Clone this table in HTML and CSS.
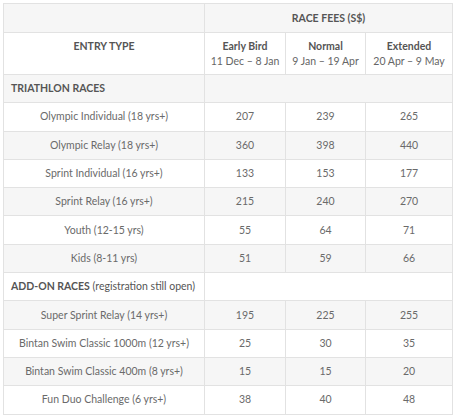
FILE: index.html
```html
<!DOCTYPE html>
<html>
<head>
<meta charset="utf-8">
<link rel="stylesheet" href="styles.css">
</head>
<body>
<div class="wrap">
<table class="fees">
  <colgroup>
    <col class="c-entry">
    <col class="c-early">
    <col class="c-normal">
    <col class="c-ext">
  </colgroup>
  <tr class="h1">
    <th></th>
    <th colspan="3">RACE FEES (S$)</th>
  </tr>
  <tr class="h2">
    <th>ENTRY TYPE</th>
    <th>Early Bird<br><span class="date">11 Dec – 8 Jan</span></th>
    <th>Normal<br><span class="date">9 Jan – 19 Apr</span></th>
    <th>Extended<br><span class="date">20 Apr – 9 May</span></th>
  </tr>
  <tr class="sec">
    <td class="sec-title"><b>TRIATHLON RACES</b></td>
    <td colspan="3"></td>
  </tr>
  <tr><td>Olympic Individual (18 yrs+)</td><td>207</td><td>239</td><td>265</td></tr>
  <tr><td>Olympic Relay (18 yrs+)</td><td>360</td><td>398</td><td>440</td></tr>
  <tr><td>Sprint Individual (16 yrs+)</td><td>133</td><td>153</td><td>177</td></tr>
  <tr><td>Sprint Relay (16 yrs+)</td><td>215</td><td>240</td><td>270</td></tr>
  <tr><td>Youth (12-15 yrs)</td><td>55</td><td>64</td><td>71</td></tr>
  <tr><td>Kids (8-11 yrs)</td><td>51</td><td>59</td><td>66</td></tr>
  <tr class="sec">
    <td class="sec-title"><b>ADD-ON RACES</b> (registration still open)</td>
    <td colspan="3"></td>
  </tr>
  <tr><td>Super Sprint Relay (14 yrs+)</td><td>195</td><td>225</td><td>255</td></tr>
  <tr><td>Bintan Swim Classic 1000m (12 yrs+)</td><td>25</td><td>30</td><td>35</td></tr>
  <tr><td>Bintan Swim Classic 400m (8 yrs+)</td><td>15</td><td>15</td><td>20</td></tr>
  <tr><td>Fun Duo Challenge (6 yrs+)</td><td>38</td><td>40</td><td>48</td></tr>
</table>
</div>
</body>
</html>
```
FILE: styles.css
```css
html, body {
  margin: 0;
  padding: 0;
  background: #fff;
}
.wrap {
  padding: 3px;
}
.fees {
  width: 449px;
  border-collapse: collapse;
  table-layout: fixed;
  font-family: Lato, "Open Sans", sans-serif;
  font-size: 10.5px;
  color: #6a6a6a;
}
.c-entry { width: 201px; }
.c-early { width: 81px; }
.c-normal { width: 80px; }
.c-ext { width: 87px; }
.fees th, .fees td {
  border: 1px solid #e2e2e2;
  padding: 0 4px;
  text-align: center;
  vertical-align: middle;
  height: 27.3px;
  line-height: 15px;
  white-space: nowrap;
}
.fees th {
  color: #555;
  font-weight: 700;
}
.fees tr:nth-child(odd) {
  background: #f6f6f6;
}
.fees .h1 th {
  height: 28px;
}
.fees .h2 th {
  height: 35px;
  vertical-align: top;
  padding-top: 6px;
}
.fees .date {
  font-weight: 400;
  color: #666;
}
.fees .sec-title {
  text-align: left;
  color: #555;
  padding-left: 7px;
}
.fees .sec-title b {
  font-weight: 700;
}
```
